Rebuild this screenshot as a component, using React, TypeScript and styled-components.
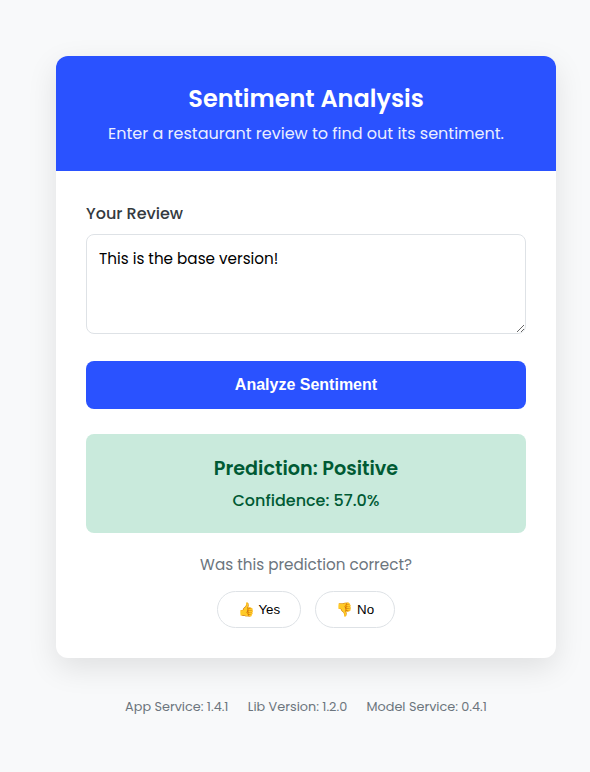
import React, { useState } from 'react';
import styled, { createGlobalStyle } from 'styled-components';

const GlobalStyle = createGlobalStyle`
  * { box-sizing: border-box; }
  body {
    margin: 0;
    background: #f8f9fa;
    font-family: Poppins, Inter, sans-serif;
    color: #343a40;
  }
`;

const Page = styled.div`
  min-height: 772px;
  padding: 56px 34px 0 56px;
`;

const Card = styled.main`
  width: 500px;
  overflow: hidden;
  border-radius: 12px;
  background: #fff;
  box-shadow: 0 10px 30px rgba(0, 0, 0, 0.1);
`;

const Header = styled.header`
  height: 115px;
  padding: 25px;
  background: #2a52ff;
  color: #fff;
  text-align: center;
`;

const Title = styled.h1`
  margin: 0;
  font-size: 24px;
  line-height: 36px;
  font-weight: 600;
`;

const Subtitle = styled.p`
  margin: 5px 0 0;
  font-size: 16px;
  line-height: 24px;
  opacity: 0.9;
`;

const Body = styled.div`
  display: flex;
  flex-direction: column;
  padding: 30px;
`;

const Label = styled.label`
  margin: 1px 0 8px;
  font-size: 16px;
  line-height: 24px;
  font-weight: 500;
`;

const ReviewInput = styled.textarea`
  display: block;
  width: 100%;
  height: 100px;
  padding: 12px;
  border: 1px solid #dee2e6;
  border-radius: 8px;
  outline: none;
  background: #fff;
  color: #000;
  font-family: inherit;
  font-size: 15.2px;
  resize: vertical;
`;

const SubmitButton = styled.button`
  height: 48px;
  margin-top: 27px;
  border: none;
  border-radius: 8px;
  background: #2a52ff;
  color: #fff;
  font: 600 16px 'Liberation Sans', Arial, sans-serif;
  cursor: pointer;
`;

const Result = styled.section`
  height: 99px;
  margin-top: 25px;
  padding: 20px;
  border-radius: 8px;
  background: #c9eadc;
  color: #005a34;
  text-align: center;
`;

const Prediction = styled.h2`
  margin: 0;
  font-size: 19.2px;
  line-height: 29px;
  font-weight: 600;
`;

const Confidence = styled.p`
  margin: 6px 0 0;
  font-size: 16px;
  line-height: 24px;
  font-weight: 500;
`;

const Question = styled.p`
  margin: 20px 0 15px;
  color: #6c757d;
  font-size: 15.2px;
  line-height: 23px;
  text-align: center;
`;

const Choices = styled.div`
  display: flex;
  justify-content: center;
  gap: 14.2px;
`;

const ChoiceButton = styled.button`
  height: 37px;
  padding: 0 20px;
  border: 1px solid #dee2e6;
  border-radius: 20px;
  background: #fff;
  color: #000;
  font: 13.3333px 'Liberation Sans', Arial, sans-serif;
  cursor: pointer;
`;

const Versions = styled.footer`
  display: flex;
  justify-content: center;
  gap: 19.4px;
  width: 500px;
  margin-top: 39px;
  color: #6c757d;
  font-size: 12.8px;
  line-height: 19px;
`;

export default function App() {
  const [review, setReview] = useState('This is the base version!');
  return (
    <Page>
      <GlobalStyle />
      <Card>
        <Header>
          <Title>Sentiment Analysis</Title>
          <Subtitle>Enter a restaurant review to find out its sentiment.</Subtitle>
        </Header>
        <Body>
          <Label htmlFor="review">Your Review</Label>
          <ReviewInput id="review" value={review} onChange={(e) => setReview(e.target.value)} />
          <SubmitButton type="button">Analyze Sentiment</SubmitButton>
          <Result>
            <Prediction>Prediction: Positive</Prediction>
            <Confidence>Confidence: 57.0%</Confidence>
          </Result>
          <Question>Was this prediction correct?</Question>
          <Choices>
            <ChoiceButton type="button">👍 Yes</ChoiceButton>
            <ChoiceButton type="button">👎 No</ChoiceButton>
          </Choices>
        </Body>
      </Card>
      <Versions>
        <span>App Service: 1.4.1</span>
        <span>Lib Version: 1.2.0</span>
        <span>Model Service: 0.4.1</span>
      </Versions>
    </Page>
  );
}
